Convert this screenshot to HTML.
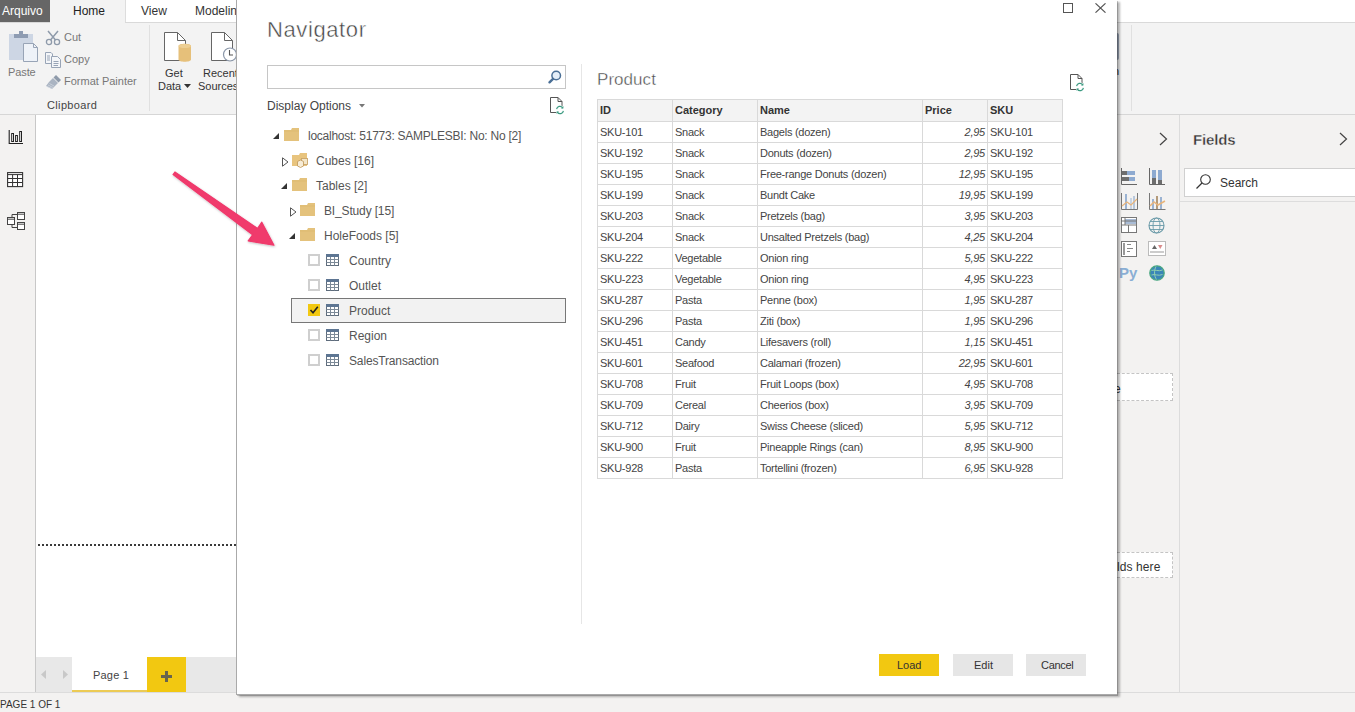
<!DOCTYPE html>
<html><head><meta charset="utf-8"><style>
*{margin:0;padding:0;box-sizing:border-box}
html,body{width:1355px;height:712px;overflow:hidden;background:#f3f2f1;font-family:"Liberation Sans",sans-serif;position:relative}
.a{position:absolute}
.t{position:absolute;white-space:nowrap;line-height:1}
.th{font-size:11px;font-weight:bold;color:#333}
.td{font-size:11px;color:#444;letter-spacing:-0.25px}
.pr{font-style:italic}
.tr{font-size:12px;color:#555}
.cb{width:12px;height:12px;border:2px solid #cfcfcf;background:#fff}
</style></head><body>
<svg width="0" height="0" style="position:absolute"><defs>
<g id="fold"><path d="M0 2H7L8 0H15V13H0Z" fill="#e4c27c"/><path d="M0 3H15" stroke="#d9b56a" stroke-width="0.6"/></g>
<g id="tbl"><rect x="0.5" y="0.5" width="12" height="11" fill="#fff" stroke="#5e6c7c"/><rect x="0" y="0" width="13" height="3" fill="#5d7592"/><path d="M0.5 5.5H12.5M0.5 8.5H12.5M4.5 3V11.5M8.5 3V11.5" stroke="#7d8a98" stroke-width="1"/></g>
<g id="refr"><path d="M3.5 1.5H11L15 5.5V16.5H3.5Z" stroke="#555" stroke-width="1" fill="#fff"/><path d="M11 1.5V5.5H15" stroke="#555" stroke-width="1" fill="none"/><circle cx="13" cy="14" r="4.6" fill="#fff"/><path d="M9.6 13.2A3.4 3.4 0 0 1 15.6 11.6" stroke="#3a9a80" stroke-width="1.2" fill="none"/><path d="M16.6 10.2L16.2 12.8L13.8 12.2Z" fill="#3a9a80"/><path d="M16.4 14.8A3.4 3.4 0 0 1 10.4 16.4" stroke="#3a9a80" stroke-width="1.2" fill="none"/><path d="M9.4 17.8L9.8 15.2L12.2 15.8Z" fill="#3a9a80"/></g>
</defs></svg>
<div class="a" style="left:0;top:0;width:1355px;height:23px;background:#fff;border-bottom:1px solid #d9d9d9"></div>
<div class="a" style="left:0;top:0;width:50px;height:22px;background:#666"></div>
<div class="t" style="left:2px;top:5px;font-size:12px;color:#fff">Arquivo</div>
<div class="a" style="left:50px;top:0;width:75px;height:23px;background:#f3f3f3"></div>
<div class="t" style="left:73px;top:5px;font-size:12px;color:#222">Home</div>
<div class="a" style="left:125px;top:0;width:1px;height:22px;background:#ddd"></div>
<div class="t" style="left:141px;top:5px;font-size:12px;color:#333">View</div>
<div class="t" style="left:195px;top:5px;font-size:12px;color:#333">Modeling</div>
<div class="a" style="left:0;top:23px;width:1355px;height:92px;background:#f3f3f3;border-bottom:1px solid #d6d6d6"></div>
<div class="a" style="left:149px;top:25px;width:1px;height:86px;background:#e0e0e0"></div>
<div class="a" style="left:1131px;top:25px;width:1px;height:86px;background:#e0e0e0"></div>
<div class="a" style="left:1117px;top:33px;width:2px;height:27px;background:#9aa6b8;border-radius:0 2px 2px 0"></div>
<div class="t" style="left:1113px;top:66px;font-size:11px;color:#333">n</div>
<div class="t" style="left:47px;top:100px;font-size:11px;color:#444;letter-spacing:0.35px">Clipboard</div>
<div class="t" style="left:8px;top:67px;font-size:11px;color:#777;letter-spacing:-0.1px">Paste</div>
<div class="t" style="left:64px;top:32px;font-size:11px;color:#777">Cut</div>
<div class="t" style="left:64px;top:54px;font-size:11px;color:#777">Copy</div>
<div class="t" style="left:64px;top:76px;font-size:11px;color:#777">Format Painter</div>
<div class="t" style="left:165px;top:68px;font-size:11px;color:#333">Get</div>
<div class="t" style="left:158px;top:81px;font-size:11px;color:#333">Data</div>
<svg class="a" style="left:184px;top:84px" width="7" height="4"><path d="M0 0H7L3.5 4Z" fill="#333"/></svg>
<div class="t" style="left:203px;top:68px;font-size:11px;color:#333">Recent</div>
<div class="t" style="left:198px;top:81px;font-size:11px;color:#333">Sources</div>
<svg class="a" style="left:8px;top:30px" width="32" height="33" viewBox="0 0 32 33">
<rect x="1" y="4" width="24" height="26" fill="#cdd6e4"/>
<rect x="6" y="4" width="14" height="4" fill="#8e9cb2"/><rect x="11" y="1" width="4" height="4" fill="#8e9cb2"/>
<path d="M15.5 13.5H25.5L29.5 17.5V31.5H15.5Z" fill="#eef2f8" stroke="#98a4b6" stroke-width="1"/>
<path d="M25.5 13.5V17.5H29.5" fill="none" stroke="#98a4b6"/>
</svg>
<svg class="a" style="left:45px;top:30px" width="16" height="16" viewBox="0 0 16 16">
<path d="M3 1L10.5 10M13 1L5.5 10" stroke="#8e9aaa" stroke-width="1.5"/>
<circle cx="4" cy="12" r="2.6" fill="none" stroke="#8e9aaa" stroke-width="1.3"/>
<circle cx="12" cy="12" r="2.6" fill="none" stroke="#8e9aaa" stroke-width="1.3"/>
</svg>
<svg class="a" style="left:45px;top:52px" width="16" height="16" viewBox="0 0 16 16">
<path d="M0.5 0.5H6L7.5 2V11.5H0.5Z" fill="#f4f6f9" stroke="#98a4b6"/>
<path d="M6.5 4.5H12.5L15.5 7.5V15.5H6.5Z" fill="#f4f6f9" stroke="#98a4b6"/>
<path d="M2 4H5M2 6H5M2 8H5M8.5 9.5H13.5M8.5 11.5H13.5M8.5 13.5H13" stroke="#98a4b6" stroke-width="1"/>
</svg>
<svg class="a" style="left:45px;top:74px" width="17" height="16" viewBox="0 0 17 16">
<path d="M11 1L16 6L13.5 8.5L8.5 3.5Z" fill="#8e9aaa"/>
<path d="M8 4L13 9L7 15L1 12L4 8Z" fill="#aab4c2"/>
<path d="M2 12.5L7 14.5M3 11L8 13.5M4.5 9.5L9 12" stroke="#d4dae2" stroke-width="0.7"/>
</svg>
<svg class="a" style="left:163px;top:31px" width="30" height="32" viewBox="0 0 30 32">
<path d="M1.5 1.5H14.5L22.5 9.5V29.5H1.5Z" fill="#fff" stroke="#666" stroke-width="1"/>
<path d="M14.5 1.5V9.5H22.5" fill="none" stroke="#666"/>
<path d="M15.5 15C15.5 12 28 12 28 15V28.5C28 31.5 15.5 31.5 15.5 28.5Z" fill="#e6c07a"/>
<ellipse cx="21.75" cy="15" rx="6.25" ry="2" fill="#edcf94"/>
</svg>
<svg class="a" style="left:210px;top:31px" width="27" height="32" viewBox="0 0 27 32">
<path d="M1.5 1.5H14.5L22.5 9.5V29.5H1.5Z" fill="#fff" stroke="#666" stroke-width="1"/>
<path d="M14.5 1.5V9.5H22.5" fill="none" stroke="#666"/>
<circle cx="20" cy="23.5" r="6.5" fill="#fff" stroke="#8a96a8" stroke-width="1.2"/>
<path d="M19.5 19V24H23" fill="none" stroke="#555" stroke-width="1.1"/>
</svg>
<div class="a" style="left:0;top:115px;width:36px;height:577px;background:#f3f2f1;border-right:1px solid #c8c8c8"></div>
<svg class="a" style="left:8px;top:129px" width="16" height="16" viewBox="0 0 16 16">
<path d="M1.2 1V14.5H15" fill="none" stroke="#222" stroke-width="1.1"/>
<rect x="3.7" y="4.5" width="1.8" height="8" fill="#fff" stroke="#222" stroke-width="1"/>
<rect x="7.6" y="6.5" width="1.8" height="6" fill="#fff" stroke="#222" stroke-width="1"/>
<rect x="11.7" y="2.5" width="1.8" height="10" fill="#fff" stroke="#222" stroke-width="1"/>
</svg>
<svg class="a" style="left:7px;top:171px" width="17" height="17" viewBox="0 0 17 17">
<rect x="0.6" y="1.6" width="15" height="14" fill="#fff" stroke="#333" stroke-width="1.1"/>
<path d="M0.5 3.6H15.5M0.5 7.5H15.5M0.5 11.5H15.5M5.6 3.6V15.5M10.5 3.6V15.5" stroke="#333" stroke-width="1"/>
</svg>
<svg class="a" style="left:7px;top:211px" width="19" height="20" viewBox="0 0 19 20">
<path d="M5 6.5V3.5H10.5M5 13.5V16.5H10.5" fill="none" stroke="#444" stroke-width="1"/>
<rect x="0.5" y="6.5" width="7" height="7" fill="#fff" stroke="#444"/><path d="M0.5 8.2H7.5" stroke="#444"/>
<rect x="10.5" y="1.5" width="7" height="7" fill="#fff" stroke="#444"/><path d="M10.5 3.2H17.5" stroke="#444"/>
<rect x="10.5" y="11.5" width="7" height="7" fill="#fff" stroke="#444"/><path d="M10.5 13.2H17.5" stroke="#444"/>
</svg>
<div class="a" style="left:36px;top:115px;width:1081px;height:542px;background:#fff"></div>
<div class="a" style="left:38px;top:544px;width:198px;height:2px;background:repeating-linear-gradient(90deg,#3a3a3a 0 2px,transparent 2px 4px)"></div>
<div class="a" style="left:36px;top:657px;width:1081px;height:35px;background:#e8e8e8"></div>
<svg class="a" style="left:41px;top:670px" width="6" height="9"><path d="M5 0V9L0 4.5Z" fill="#c8c8c8"/></svg>
<svg class="a" style="left:63px;top:670px" width="6" height="9"><path d="M0 0V9L5 4.5Z" fill="#c8c8c8"/></svg>
<div class="a" style="left:72px;top:657px;width:75px;height:35px;background:#fff;border-bottom:2px solid #eccb55"></div>
<div class="t" style="left:93px;top:670px;font-size:11px;color:#444;letter-spacing:0.2px">Page 1</div>
<div class="a" style="left:147px;top:657px;width:39px;height:35px;background:#f2c811"></div>
<div class="a" style="left:161px;top:675px;width:11px;height:3px;background:#68644f"></div>
<div class="a" style="left:165px;top:671px;width:3px;height:11px;background:#68644f"></div>
<div class="a" style="left:0;top:692px;width:1355px;height:20px;background:#f3f2f1;border-top:1px solid #dcdcdc"></div>
<div class="t" style="left:0;top:700px;font-size:10px;color:#333">PAGE 1 OF 1</div>
<div class="a" style="left:1117px;top:115px;width:63px;height:577px;background:#f3f2f1"></div>
<div class="a" style="left:1179px;top:115px;width:1px;height:577px;background:#dcdcdc"></div>
<svg class="a" style="left:1159px;top:132px" width="9" height="14"><path d="M1 1L7.5 7L1 13" fill="none" stroke="#444" stroke-width="1.2"/></svg>
<svg class="a" style="left:1339px;top:132px" width="9" height="14"><path d="M1 1L7.5 7L1 13" fill="none" stroke="#444" stroke-width="1.2"/></svg>
<div class="t" style="left:1193px;top:132px;font-size:15px;font-weight:bold;color:#333;-webkit-text-stroke:0.35px #f3f2f1;letter-spacing:-0.15px">Fields</div>
<div class="a" style="left:1184px;top:168px;width:180px;height:29px;background:#fff;border:1px solid #d0d0d0"></div>
<svg class="a" style="left:1195px;top:173px" width="17" height="17"><circle cx="10.5" cy="6.5" r="4.8" fill="none" stroke="#333" stroke-width="1.1"/><path d="M7 10L1.5 15.5" stroke="#333" stroke-width="1.2"/></svg>
<div class="t" style="left:1220px;top:177px;font-size:12px;color:#333">Search</div>
<div class="a" style="left:1180px;top:201px;width:175px;height:1px;background:#ddd"></div>
<div class="a" style="left:1117px;top:373px;width:56px;height:28px;background:#fff;border:1px dashed #c4c4c4;border-left:none"></div>
<div class="t" style="left:1114px;top:383px;font-size:12px;color:#333">e</div>
<div class="a" style="left:1117px;top:552px;width:56px;height:26px;background:#fff;border:1px dashed #c4c4c4;border-left:none"></div>
<div class="t" style="left:1117px;top:561px;font-size:12px;color:#333;letter-spacing:0.1px">lds here</div>
<svg class="a" style="left:1121px;top:168px" width="17" height="17" viewBox="0 0 17 17">
<path d="M0.5 0V16.5H16" fill="none" stroke="#666"/>
<rect x="1" y="3" width="5" height="4" fill="#6d6d6d"/><rect x="6" y="3" width="8" height="4" fill="#8eaad0"/>
<rect x="1" y="9" width="7" height="4" fill="#6d6d6d"/><rect x="8" y="9" width="6" height="4" fill="#8eaad0"/>
</svg>
<svg class="a" style="left:1149px;top:168px" width="17" height="17" viewBox="0 0 17 17">
<path d="M0.5 0V16.5H16" fill="none" stroke="#666"/>
<rect x="3" y="2" width="4" height="8" fill="#8eaad0"/><rect x="3" y="10" width="4" height="6" fill="#6d6d6d"/>
<rect x="9" y="2" width="4" height="10" fill="#8eaad0"/><rect x="9" y="12" width="4" height="4" fill="#6d6d6d"/>
</svg>
<svg class="a" style="left:1121px;top:193px" width="17" height="17" viewBox="0 0 17 17">
<path d="M0.5 0V16.5H16.5V0" fill="none" stroke="#777"/>
<rect x="4" y="1" width="2" height="15" fill="#9bb3d2"/><rect x="9" y="5" width="2" height="11" fill="#c8d4e4"/><rect x="12" y="3" width="2" height="13" fill="#b8c8dc"/>
<path d="M1 13L6 9L10 12L16 6" fill="none" stroke="#e8b47a" stroke-width="1.2"/>
</svg>
<svg class="a" style="left:1149px;top:193px" width="17" height="17" viewBox="0 0 17 17">
<path d="M0.5 0V16.5H16.5" fill="none" stroke="#777"/>
<rect x="3" y="6" width="2" height="10" fill="#9bb3d2"/><rect x="7" y="3" width="2" height="13" fill="#b39a7a"/><rect x="11" y="4" width="2" height="12" fill="#9bb3d2"/>
<path d="M1 13L5 9L9 12L16 8" fill="none" stroke="#e8b47a" stroke-width="1.5"/>
</svg>
<svg class="a" style="left:1121px;top:217px" width="17" height="16" viewBox="0 0 17 16">
<rect x="0.5" y="0.5" width="15" height="15" fill="#fff" stroke="#777"/>
<rect x="4" y="2" width="11" height="5" fill="#a9bcd6"/>
<path d="M0.5 4H15.5M0.5 8H15.5M7.5 8V15.5M4 0.5V8" stroke="#777"/>
</svg>
<svg class="a" style="left:1148px;top:217px" width="17" height="17" viewBox="0 0 17 17">
<circle cx="8.5" cy="8.5" r="7.5" fill="none" stroke="#6a9aa8" stroke-width="1.1"/>
<ellipse cx="8.5" cy="8.5" rx="3.5" ry="7.5" fill="none" stroke="#6a9aa8" stroke-width="0.9"/>
<path d="M1 8.5H16M2.2 4.5H14.8M2.2 12.5H14.8" stroke="#6a9aa8" stroke-width="0.9"/>
</svg>
<svg class="a" style="left:1121px;top:241px" width="17" height="16" viewBox="0 0 17 16">
<rect x="0.5" y="0.5" width="15" height="15" fill="#fff" stroke="#777"/>
<rect x="2" y="2" width="2" height="12" fill="#999"/>
<path d="M6 3.5H10M6 7.5H12M6 10.5H9" stroke="#888" stroke-width="1.2"/>
</svg>
<svg class="a" style="left:1148px;top:241px" width="18" height="15" viewBox="0 0 18 15">
<rect x="0.5" y="0.5" width="17" height="14" fill="#fff" stroke="#bbb"/>
<path d="M4 8L6.5 4L9 8Z" fill="#666"/><path d="M10 4H14.5L12.25 8Z" fill="#d98c8c"/>
<rect x="2" y="10" width="14" height="2" fill="#ccc"/>
</svg>
<div class="t" style="left:1119px;top:265px;font-size:15px;font-weight:bold;color:#8aaed4">Py</div>
<svg class="a" style="left:1148px;top:264px" width="18" height="18" viewBox="0 0 18 18">
<circle cx="9" cy="9" r="7.2" fill="#3a86b8" stroke="#4aa880" stroke-width="1.3"/>
<path d="M3.5 6.5C7 5 10 8 14.5 6M3.5 11C7 9.5 10 12.5 14.5 10.5M8 2.5C6 6 6 12 8.5 15.5" stroke="#8fd0b0" stroke-width="1" fill="none"/>
</svg>
<div class="a" style="left:236px;top:0;width:881px;height:695px;background:#fff;border-left:1px solid #aaa;border-bottom:1px solid #aaa;box-shadow:1px 1px 0 rgba(0,0,0,.18),3px 2px 2px rgba(0,0,0,.28)"></div>
<div class="t" style="left:267px;top:19px;font-size:22px;color:#444;letter-spacing:0.6px;-webkit-text-stroke:0.45px #fff">Navigator</div>
<!-- dialog content -->
<div class="a" style="left:1063px;top:3px;width:10px;height:10px;border:1px solid #555"></div>
<svg class="a" style="left:1095px;top:3px" width="11" height="10" viewBox="0 0 11 10"><path d="M0.5 0.3L10.5 9.7M10.5 0.3L0.5 9.7" stroke="#555" stroke-width="1.1" fill="none"/></svg>
<div class="a" style="left:267px;top:65px;width:299px;height:24px;border:1px solid #c6c6c6;background:#fff"></div>
<svg class="a" style="left:546px;top:68px" width="16" height="16" viewBox="0 0 16 16"><circle cx="10.2" cy="7.5" r="4.3" stroke="#4a6f96" stroke-width="1.5" fill="#e4eef8"/><path d="M7 10.8L3.5 14.3" stroke="#4a6f96" stroke-width="2.4" stroke-linecap="round"/></svg>
<div class="t" style="left:267px;top:100px;font-size:12px;color:#444">Display Options</div>
<svg class="a" style="left:359px;top:104px" width="6" height="4" viewBox="0 0 6 4"><path d="M0 0H6L3 3.5z" fill="#777"/></svg>
<svg class="a" style="left:547px;top:96px" width="19" height="19" viewBox="0 0 19 19"><use href="#refr"/></svg>
<!-- divider -->
<div class="a" style="left:581px;top:64px;width:1px;height:560px;background:#e6e6e6"></div>
<!-- tree -->
<svg class="a" style="left:273px;top:133px" width="6" height="6" viewBox="0 0 6 6"><path d="M6 0V6H0Z" fill="#333"/></svg>
<svg class="a folder" style="left:284px;top:128px" width="16" height="13"><use href="#fold"/></svg>
<div class="t tr" style="left:308px;top:130px;letter-spacing:-0.25px">localhost: 51773: SAMPLESBI: No: No [2]</div>

<svg class="a" style="left:282px;top:157px" width="7" height="10" viewBox="0 0 7 10"><path d="M0.5 0.8L6 5L0.5 9.2Z" stroke="#555" stroke-width="1" fill="none"/></svg>
<svg class="a" style="left:292px;top:153px" width="17" height="15" viewBox="0 0 17 15"><path d="M0 2H7L8 0H15V13H0Z" fill="#e8c47e"/><rect x="9.5" y="5.5" width="6" height="6" fill="#f4e6c8" stroke="#c9a56a" stroke-width="0.9"/><path d="M5.5 8.5L8.5 7L11.5 8.5V13L8.5 14.5L5.5 13Z" fill="#f7ecd6" stroke="#c49e62" stroke-width="0.9"/></svg>
<div class="t tr" style="left:316px;top:155px">Cubes [16]</div>

<svg class="a" style="left:281px;top:183px" width="6" height="6" viewBox="0 0 6 6"><path d="M6 0V6H0Z" fill="#333"/></svg>
<svg class="a folder" style="left:292px;top:178px" width="16" height="13"><use href="#fold"/></svg>
<div class="t tr" style="left:316px;top:180px">Tables [2]</div>

<svg class="a" style="left:290px;top:207px" width="7" height="10" viewBox="0 0 7 10"><path d="M0.5 0.8L6 5L0.5 9.2Z" stroke="#555" stroke-width="1" fill="none"/></svg>
<svg class="a folder" style="left:300px;top:203px" width="16" height="13"><use href="#fold"/></svg>
<div class="t tr" style="left:324px;top:205px;letter-spacing:-0.15px">BI_Study [15]</div>

<svg class="a" style="left:289px;top:233px" width="6" height="6" viewBox="0 0 6 6"><path d="M6 0V6H0Z" fill="#333"/></svg>
<svg class="a folder" style="left:300px;top:228px" width="16" height="13"><use href="#fold"/></svg>
<div class="t tr" style="left:324px;top:230px">HoleFoods [5]</div>

<div class="a" style="left:291px;top:298px;width:275px;height:25px;background:#f2f2f2;border:1px solid #777"></div>

<div class="a cb" style="left:308px;top:254px"></div>
<svg class="a" style="left:326px;top:254px" width="13" height="12"><use href="#tbl"/></svg>
<div class="t tr" style="left:349px;top:255px">Country</div>

<div class="a cb" style="left:308px;top:279px"></div>
<svg class="a" style="left:326px;top:279px" width="13" height="12"><use href="#tbl"/></svg>
<div class="t tr" style="left:349px;top:280px">Outlet</div>

<div class="a" style="left:308px;top:304px;width:12px;height:12px;background:#f2c811"></div>
<svg class="a" style="left:308px;top:304px" width="12" height="12" viewBox="0 0 12 12"><path d="M2.5 6L5 8.8L9.8 2.8" stroke="#222" stroke-width="1.6" fill="none"/></svg>
<svg class="a" style="left:326px;top:304px" width="13" height="12"><use href="#tbl"/></svg>
<div class="t tr" style="left:349px;top:305px">Product</div>

<div class="a cb" style="left:308px;top:329px"></div>
<svg class="a" style="left:326px;top:329px" width="13" height="12"><use href="#tbl"/></svg>
<div class="t tr" style="left:349px;top:330px">Region</div>

<div class="a cb" style="left:308px;top:354px"></div>
<svg class="a" style="left:326px;top:354px" width="13" height="12"><use href="#tbl"/></svg>
<div class="t tr" style="left:349px;top:355px;letter-spacing:-0.15px">SalesTransaction</div>

<!-- preview -->
<div class="t" style="left:597px;top:71px;font-size:17px;color:#444;letter-spacing:0.05px;-webkit-text-stroke:0.4px #fff">Product</div>
<svg class="a" style="left:1067px;top:73px" width="19" height="19" viewBox="0 0 19 19"><use href="#refr"/></svg>

<div class="a" style="left:597px;top:99px;width:466px;height:380px;border:1px solid #d9d9d9;background:#fff"></div>
<div class="a" style="left:598px;top:100px;width:464px;height:21px;background:#f3f3f3"></div>
<div class="a" style="left:672px;top:100px;width:1px;height:378px;background:#d9d9d9"></div>
<div class="a" style="left:757px;top:100px;width:1px;height:378px;background:#d9d9d9"></div>
<div class="a" style="left:922px;top:100px;width:1px;height:378px;background:#d9d9d9"></div>
<div class="a" style="left:987px;top:100px;width:1px;height:378px;background:#d9d9d9"></div>
<div class="a" style="left:598px;top:121px;width:464px;height:1px;background:#d9d9d9"></div>
<div class="a" style="left:598px;top:142px;width:464px;height:1px;background:#d9d9d9"></div>
<div class="a" style="left:598px;top:163px;width:464px;height:1px;background:#d9d9d9"></div>
<div class="a" style="left:598px;top:184px;width:464px;height:1px;background:#d9d9d9"></div>
<div class="a" style="left:598px;top:205px;width:464px;height:1px;background:#d9d9d9"></div>
<div class="a" style="left:598px;top:226px;width:464px;height:1px;background:#d9d9d9"></div>
<div class="a" style="left:598px;top:247px;width:464px;height:1px;background:#d9d9d9"></div>
<div class="a" style="left:598px;top:268px;width:464px;height:1px;background:#d9d9d9"></div>
<div class="a" style="left:598px;top:289px;width:464px;height:1px;background:#d9d9d9"></div>
<div class="a" style="left:598px;top:310px;width:464px;height:1px;background:#d9d9d9"></div>
<div class="a" style="left:598px;top:331px;width:464px;height:1px;background:#d9d9d9"></div>
<div class="a" style="left:598px;top:352px;width:464px;height:1px;background:#d9d9d9"></div>
<div class="a" style="left:598px;top:373px;width:464px;height:1px;background:#d9d9d9"></div>
<div class="a" style="left:598px;top:394px;width:464px;height:1px;background:#d9d9d9"></div>
<div class="a" style="left:598px;top:415px;width:464px;height:1px;background:#d9d9d9"></div>
<div class="a" style="left:598px;top:436px;width:464px;height:1px;background:#d9d9d9"></div>
<div class="a" style="left:598px;top:457px;width:464px;height:1px;background:#d9d9d9"></div>
<div class="t th" style="left:600px;top:105px">ID</div>
<div class="t th" style="left:675px;top:105px">Category</div>
<div class="t th" style="left:760px;top:105px">Name</div>
<div class="t th" style="left:925px;top:105px">Price</div>
<div class="t th" style="left:990px;top:105px">SKU</div>
<div class="t td" style="left:600px;top:127px">SKU-101</div>
<div class="t td" style="left:675px;top:127px">Snack</div>
<div class="t td" style="left:760px;top:127px">Bagels (dozen)</div>
<div class="t td pr" style="right:370px;top:127px">2,95</div>
<div class="t td" style="left:990px;top:127px">SKU-101</div>
<div class="t td" style="left:600px;top:148px">SKU-192</div>
<div class="t td" style="left:675px;top:148px">Snack</div>
<div class="t td" style="left:760px;top:148px">Donuts (dozen)</div>
<div class="t td pr" style="right:370px;top:148px">2,95</div>
<div class="t td" style="left:990px;top:148px">SKU-192</div>
<div class="t td" style="left:600px;top:169px">SKU-195</div>
<div class="t td" style="left:675px;top:169px">Snack</div>
<div class="t td" style="left:760px;top:169px">Free-range Donuts (dozen)</div>
<div class="t td pr" style="right:370px;top:169px">12,95</div>
<div class="t td" style="left:990px;top:169px">SKU-195</div>
<div class="t td" style="left:600px;top:190px">SKU-199</div>
<div class="t td" style="left:675px;top:190px">Snack</div>
<div class="t td" style="left:760px;top:190px">Bundt Cake</div>
<div class="t td pr" style="right:370px;top:190px">19,95</div>
<div class="t td" style="left:990px;top:190px">SKU-199</div>
<div class="t td" style="left:600px;top:211px">SKU-203</div>
<div class="t td" style="left:675px;top:211px">Snack</div>
<div class="t td" style="left:760px;top:211px">Pretzels (bag)</div>
<div class="t td pr" style="right:370px;top:211px">3,95</div>
<div class="t td" style="left:990px;top:211px">SKU-203</div>
<div class="t td" style="left:600px;top:232px">SKU-204</div>
<div class="t td" style="left:675px;top:232px">Snack</div>
<div class="t td" style="left:760px;top:232px">Unsalted Pretzels (bag)</div>
<div class="t td pr" style="right:370px;top:232px">4,25</div>
<div class="t td" style="left:990px;top:232px">SKU-204</div>
<div class="t td" style="left:600px;top:253px">SKU-222</div>
<div class="t td" style="left:675px;top:253px">Vegetable</div>
<div class="t td" style="left:760px;top:253px">Onion ring</div>
<div class="t td pr" style="right:370px;top:253px">5,95</div>
<div class="t td" style="left:990px;top:253px">SKU-222</div>
<div class="t td" style="left:600px;top:274px">SKU-223</div>
<div class="t td" style="left:675px;top:274px">Vegetable</div>
<div class="t td" style="left:760px;top:274px">Onion ring</div>
<div class="t td pr" style="right:370px;top:274px">4,95</div>
<div class="t td" style="left:990px;top:274px">SKU-223</div>
<div class="t td" style="left:600px;top:295px">SKU-287</div>
<div class="t td" style="left:675px;top:295px">Pasta</div>
<div class="t td" style="left:760px;top:295px">Penne (box)</div>
<div class="t td pr" style="right:370px;top:295px">1,95</div>
<div class="t td" style="left:990px;top:295px">SKU-287</div>
<div class="t td" style="left:600px;top:316px">SKU-296</div>
<div class="t td" style="left:675px;top:316px">Pasta</div>
<div class="t td" style="left:760px;top:316px">Ziti (box)</div>
<div class="t td pr" style="right:370px;top:316px">1,95</div>
<div class="t td" style="left:990px;top:316px">SKU-296</div>
<div class="t td" style="left:600px;top:337px">SKU-451</div>
<div class="t td" style="left:675px;top:337px">Candy</div>
<div class="t td" style="left:760px;top:337px">Lifesavers (roll)</div>
<div class="t td pr" style="right:370px;top:337px">1,15</div>
<div class="t td" style="left:990px;top:337px">SKU-451</div>
<div class="t td" style="left:600px;top:358px">SKU-601</div>
<div class="t td" style="left:675px;top:358px">Seafood</div>
<div class="t td" style="left:760px;top:358px">Calamari (frozen)</div>
<div class="t td pr" style="right:370px;top:358px">22,95</div>
<div class="t td" style="left:990px;top:358px">SKU-601</div>
<div class="t td" style="left:600px;top:379px">SKU-708</div>
<div class="t td" style="left:675px;top:379px">Fruit</div>
<div class="t td" style="left:760px;top:379px">Fruit Loops (box)</div>
<div class="t td pr" style="right:370px;top:379px">4,95</div>
<div class="t td" style="left:990px;top:379px">SKU-708</div>
<div class="t td" style="left:600px;top:400px">SKU-709</div>
<div class="t td" style="left:675px;top:400px">Cereal</div>
<div class="t td" style="left:760px;top:400px">Cheerios (box)</div>
<div class="t td pr" style="right:370px;top:400px">3,95</div>
<div class="t td" style="left:990px;top:400px">SKU-709</div>
<div class="t td" style="left:600px;top:421px">SKU-712</div>
<div class="t td" style="left:675px;top:421px">Dairy</div>
<div class="t td" style="left:760px;top:421px">Swiss Cheese (sliced)</div>
<div class="t td pr" style="right:370px;top:421px">5,95</div>
<div class="t td" style="left:990px;top:421px">SKU-712</div>
<div class="t td" style="left:600px;top:442px">SKU-900</div>
<div class="t td" style="left:675px;top:442px">Fruit</div>
<div class="t td" style="left:760px;top:442px">Pineapple Rings (can)</div>
<div class="t td pr" style="right:370px;top:442px">8,95</div>
<div class="t td" style="left:990px;top:442px">SKU-900</div>
<div class="t td" style="left:600px;top:463px">SKU-928</div>
<div class="t td" style="left:675px;top:463px">Pasta</div>
<div class="t td" style="left:760px;top:463px">Tortellini (frozen)</div>
<div class="t td pr" style="right:370px;top:463px">6,95</div>
<div class="t td" style="left:990px;top:463px">SKU-928</div>
<div class="a" style="left:879px;top:654px;width:60px;height:22px;background:#f2c811"></div>
<div class="t" style="left:897px;top:660px;font-size:11px;color:#333">Load</div>
<div class="a" style="left:953px;top:654px;width:60px;height:22px;background:#e6e6e6"></div>
<div class="t" style="left:974px;top:660px;font-size:11px;color:#333">Edit</div>
<div class="a" style="left:1026px;top:654px;width:60px;height:22px;background:#e6e6e6"></div>
<div class="t" style="left:1041px;top:660px;font-size:11px;color:#333;letter-spacing:-0.3px">Cancel</div>

<svg class="a" style="left:160px;top:160px" width="130" height="100" viewBox="0 0 130 100">
<defs><filter id="sh" x="-20%" y="-20%" width="140%" height="140%"><feDropShadow dx="0.5" dy="1" stdDeviation="1" flood-color="#000" flood-opacity="0.25"/></filter></defs>
<path d="M14.93 12.0L97.6 68.4L101.8 62.2L114 85.2L88.2 80.9L92.6 74.8L13.07 14.6Z" fill="#f03a6c" stroke="#f03a6c" stroke-width="1.2" stroke-linejoin="round" filter="url(#sh)"/>
</svg>
</body></html>
